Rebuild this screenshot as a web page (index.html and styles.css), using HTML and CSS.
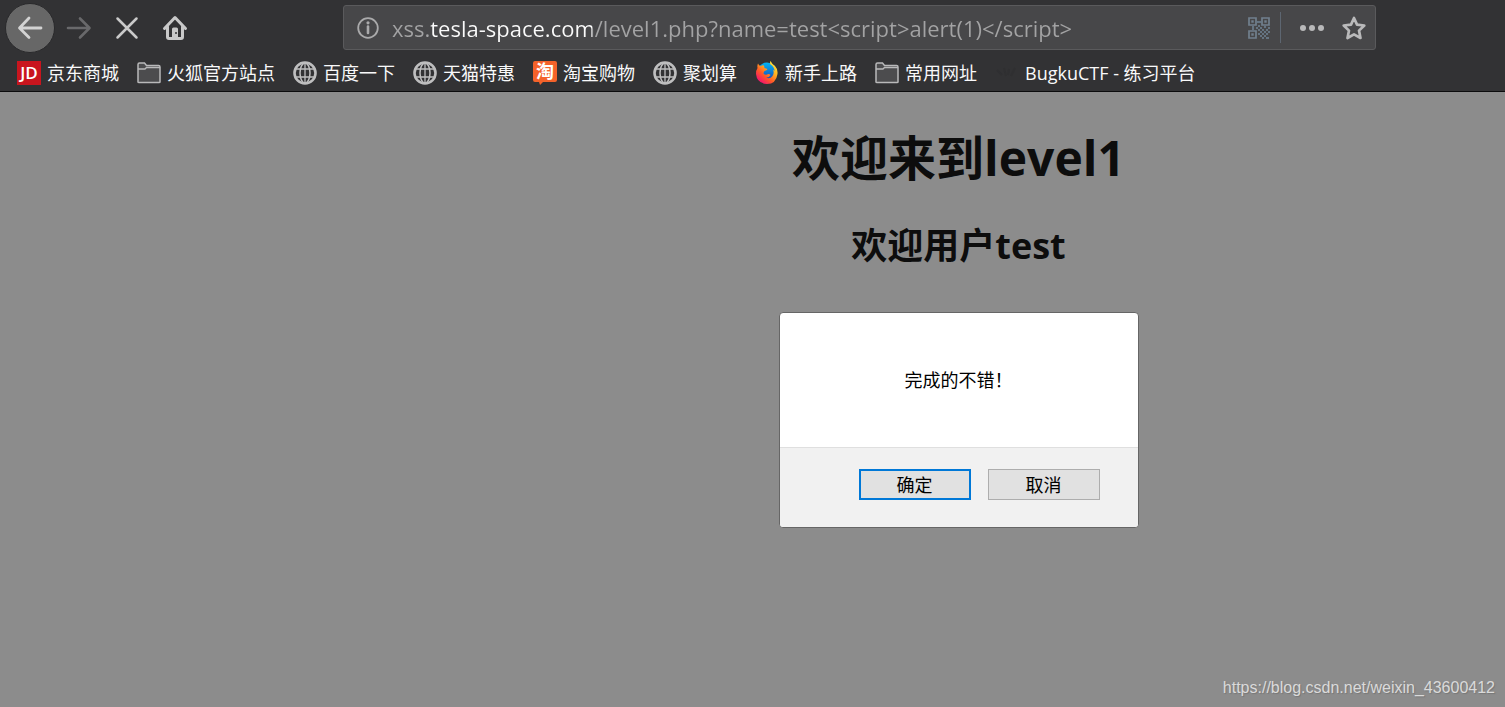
FILE: index.html
```
<!DOCTYPE html>
<html lang="zh-CN">
<head>
    <meta charset="UTF-8">
    <meta name="viewport" content="width=device-width, initial-scale=1.0">
    <title>欢迎来到level1</title>
    <link rel="stylesheet" href="styles.css">
</head>
<body>
    <!-- shared shapes -->
    <svg class="sprite" aria-hidden="true">
        <symbol id="folder" viewBox="0 0 24 24">
            <path d="M1 21V3.500Q1 2 2.500 2H7.500L9.500 4.500H21.500Q23 4.500 23 6V21Q23 21.500 22 21.500H2Q1 21.500 1 21Z" fill="#4c4c4e" stroke="#b9b9ba" stroke-width="1.500"/>
            <path d="M1 8H8L9.500 6.500H23" fill="none" stroke="#b9b9ba" stroke-width="1.300"/>
        </symbol>
        <symbol id="globe" viewBox="0 0 24 24">
            <g fill="none" stroke="#bebebf">
                <circle cx="12" cy="12" r="10.500" stroke-width="2.600"/>
                <ellipse cx="12" cy="12" rx="5" ry="10" stroke-width="1.500"/>
                <path d="M12 2V22M2 8H22M2 16H22" stroke-width="1.300"/>
            </g>
        </symbol>
        <symbol id="finder" viewBox="0 0 9 9">
            <path d="M1 1H8V8H1Z" fill="none" stroke="#71808e" stroke-width="1.700"/>
            <path d="M3.300 3.300H5.700V5.700H3.300Z" fill="#71808e"/>
        </symbol>
    </svg>

    <header class="browser">
        <div class="nav-bar">
            <button class="nav-btn back" type="button" aria-label="后退">
                <svg width="26" height="26" viewBox="0 0 26 26"><path d="M24 13H3M12 3L2.500 13L12 22.500" fill="none" stroke="#d3d3d3" stroke-width="2.800" stroke-linecap="round" stroke-linejoin="round"/></svg>
            </button>
            <button class="nav-btn" type="button" aria-label="前进">
                <svg width="26" height="26" viewBox="0 0 26 26"><path d="M2 13H23M14 3.500L23.500 13L14 22.500" fill="none" stroke="#69696b" stroke-width="2.600" stroke-linecap="round" stroke-linejoin="round"/></svg>
            </button>
            <button class="nav-btn" type="button" aria-label="停止">
                <svg width="26" height="26" viewBox="0 0 26 26"><path d="M3.500 3.500L22.500 22.500M22.500 3.500L3.500 22.500" fill="none" stroke="#cacaca" stroke-width="2.500" stroke-linecap="round"/></svg>
            </button>
            <button class="nav-btn" type="button" aria-label="主页">
                <svg width="26" height="26" viewBox="0 0 26 26">
                    <path d="M2.500 13.500L13 2.500L23.500 13.500M5.500 11.500V22Q5.500 23.500 7 23.500H19Q20.500 23.500 20.500 22V11.500" fill="none" stroke="#c9c9c9" stroke-width="3" stroke-linecap="round" stroke-linejoin="round"/>
                    <path d="M10 24V14Q10 12.500 11.500 12.500H14.500Q16 12.500 16 14V24Z" fill="#c9c9c9"/>
                    <circle cx="14" cy="18" r="1" fill="#333335"/>
                </svg>
            </button>
            <div class="url-bar">
                <button class="url-btn" type="button" aria-label="网站信息">
                    <svg width="22" height="22" viewBox="0 0 22 22"><circle cx="11" cy="11" r="9.800" fill="none" stroke="#aaaaab" stroke-width="1.800"/><path d="M11 9.500V16" stroke="#aaaaab" stroke-width="2.600" stroke-linecap="round"/><circle cx="11" cy="5.800" r="1.600" fill="#aaaaab"/></svg>
                </button>
                <input class="url" type="text" aria-label="地址" spellcheck="false" value="xss.tesla-space.com/level1.php?name=test&lt;script&gt;alert(1)&lt;/script&gt;">
                <button class="url-btn" type="button" aria-label="二维码">
                    <svg width="22" height="22" viewBox="0 0 22 22">
                        <use href="#finder" width="9" height="9"/>
                        <use href="#finder" x="13" width="9" height="9"/>
                        <use href="#finder" y="13" width="9" height="9"/>
                        <path d="M9 4h4v2h-4zM4 9h2v4h-2zM10 8h2v2h-2zM16 9h2v2h-2zM8 10h2v2h-2zM12 10h2v2h-2zM10 12h2v2h-2zM14 12h2v2h-2zM18 12h2v2h-2zM12 14h2v2h-2zM16 14h2v2h-2zM20 14h2v2h-2zM10 16h2v2h-2zM14 16h2v2h-2zM18 16h2v2h-2zM12 18h2v2h-2zM16 18h2v2h-2zM14 20h2v2h-2zM18 20h3v2h-3zM20 10h2v2h-2z" fill="#657482"/>
                    </svg>
                </button>
                <span class="divider"></span>
                <button class="url-btn more" type="button" aria-label="页面操作">
                    <svg width="24" height="24" viewBox="0 0 24 24" fill="#b9b9ba"><circle cx="3" cy="12" r="3"/><circle cx="12" cy="12" r="3"/><circle cx="21" cy="12" r="3"/></svg>
                </button>
                <button class="url-btn" type="button" aria-label="收藏">
                    <svg width="24" height="24" viewBox="0 0 24 24"><path d="M12 2L15 8.600L22.300 9.500L17 14.600L18.500 22L12 18.400L5.500 22L7 14.600L1.700 9.500L9 8.600Z" fill="none" stroke="#b9b9ba" stroke-width="2.700" stroke-linejoin="round"/></svg>
                </button>
            </div>
        </div>

        <nav class="bookmarks">
            <a href="#">
                <svg width="24" height="24" viewBox="0 0 24 24"><rect width="24" height="24" fill="#c9151e"/><text class="logo-jd" x="12" y="18" text-anchor="middle">JD</text></svg>
                京东商城
            </a>
            <a href="#"><svg width="24" height="24"><use href="#folder"/></svg>火狐官方站点</a>
            <a href="#"><svg width="24" height="24"><use href="#globe"/></svg>百度一下</a>
            <a href="#"><svg width="24" height="24"><use href="#globe"/></svg>天猫特惠</a>
            <a href="#">
                <svg width="24" height="24" viewBox="0 0 24 24"><path d="M2 0H22Q24 0 24 2V19Q24 21 22 21H10L7 24L6 21H2Q0 21 0 19V2Q0 0 2 0Z" fill="#f4622a"/><text class="logo-tao" x="12" y="17" text-anchor="middle">淘</text></svg>
                淘宝购物
            </a>
            <a href="#"><svg width="24" height="24"><use href="#globe"/></svg>聚划算</a>
            <a href="#">
                <svg width="24" height="24" viewBox="0 0 24 24">
                    <defs>
                        <linearGradient id="fox" x1="0.9" y1="0" x2="0.2" y2="0.9">
                            <stop offset="0" stop-color="#fff04a"/>
                            <stop offset="0.4" stop-color="#ffb01f"/>
                            <stop offset="0.7" stop-color="#ff5a26"/>
                            <stop offset="1" stop-color="#f5156c"/>
                        </linearGradient>
                        <linearGradient id="sky" x1="0.5" y1="0" x2="0.5" y2="1">
                            <stop offset="0" stop-color="#00b4f5"/>
                            <stop offset="1" stop-color="#1b3fae"/>
                        </linearGradient>
                    </defs>
                    <circle cx="12" cy="11" r="9.500" fill="url(#sky)"/>
                    <path d="M3 2.500Q4 4.500 5.500 5Q7.500 4 9 4.500L9.500 7L12.500 8Q12 9.500 9.500 10Q8.500 11 8.500 12.500Q10 14.500 12 13.500Q14 12.500 15.500 14Q14 17 11 16.500Q15 18.500 17.500 15Q19.500 12 18 8.500L19.500 10Q19.500 6 15.500 3.500Q14.500 1.500 15.500 0Q17 3 20 5Q23 8 22.500 13Q21 23 12 23Q2 22.500 1 13Q1 9 2.500 7Q2 4.500 3 2.500Z" fill="url(#fox)"/>
                </svg>
                新手上路
            </a>
            <a href="#"><svg width="24" height="24"><use href="#folder"/></svg>常用网址</a>
            <a href="#">
                <svg width="24" height="24" viewBox="0 0 24 24"><path d="M2 9L7 14M9 7L11 15M14 8L13 14M20 7L16 15" stroke="#2f2f31" stroke-width="2"/></svg>
                BugkuCTF - 练习平台
            </a>
        </nav>
    </header>

    <main class="page">
        <h1>欢迎来到level1</h1>
        <h2>欢迎用户test</h2>

        <div class="prompt" role="alertdialog" aria-labelledby="message">
            <p class="message" id="message">完成的不错！</p>
            <div class="actions">
                <button class="btn primary" type="button">确定</button>
                <button class="btn" type="button">取消</button>
            </div>
        </div>

        <div class="watermark">https://blog.csdn.net/weixin_43600412</div>
    </main>
</body>
</html>
```

FILE: styles.css
```
* {
    box-sizing: border-box;
}

body {
    margin: 0;
    min-height: 100vh;
    display: flex;
    flex-direction: column;
    background-color: #8c8c8c;
    font-family: "Open Sans", "Noto Sans CJK SC", sans-serif;
}

button {
    padding: 0;
    border: none;
    background: none;
    cursor: pointer;
}

svg {
    display: block;
    flex: none;
    overflow: visible;
}

.sprite {
    position: absolute;
    width: 0;
    height: 0;
}

/* browser toolbar */
.browser {
    background-color: #323234;
    border-bottom: 1px solid #0c0c0d;
}

.nav-bar {
    display: flex;
    align-items: center;
    height: 55px;
    padding: 0 129px 0 5px;
}

.nav-btn {
    display: flex;
    align-items: center;
    justify-content: center;
    width: 48px;
    height: 48px;
}

.back {
    width: 50px;
    height: 50px;
    border-radius: 50%;
    border: 1px solid #29292b;
    background-color: #676767;
}

.url-bar {
    flex: 1;
    display: flex;
    align-items: center;
    height: 45px;
    margin-left: 144px;
    padding: 0 9px 0 13px;
    border: 1px solid #5a5a5c;
    border-radius: 3px;
    background-color: #474749;
}

.url {
    flex: 1;
    min-width: 0;
    height: 40px;
    margin-left: 13px;
    padding: 0;
    border: none;
    outline: none;
    font-family: "Open Sans", sans-serif;
    font-size: 22px;
    color: #a3a3a4;
    /* the host name is brighter than the rest of the address */
    background: linear-gradient(to right, #a3a3a4 38px, #fbfbfb 38px, #fbfbfb 200px, #a3a3a4 200px);
    -webkit-background-clip: text;
    background-clip: text;
    -webkit-text-fill-color: transparent;
}

.divider {
    width: 1px;
    height: 31px;
    margin: 0 19px 0 10px;
    background-color: #5d6671;
}

.more {
    margin-right: 18px;
}

.bookmarks {
    display: flex;
    align-items: center;
    gap: 18px;
    height: 36px;
    padding-left: 17px;
}

.bookmarks a {
    display: flex;
    align-items: center;
    gap: 6px;
    color: #f9f9fa;
    font-size: 18px;
    line-height: 24px;
    white-space: nowrap;
    text-decoration: none;
}

.logo-jd {
    font: 600 17px "Open Sans", sans-serif;
    fill: #fff;
}

.logo-tao {
    font: bold 18px "Noto Sans CJK SC", sans-serif;
    fill: #fff;
}

/* page */
.page {
    position: relative;
    flex: 1;
    display: flex;
    flex-direction: column;
    align-items: center;
    padding: 34px 0 0 412px;
    color: #0d0d0d;
}

h1,
h2 {
    margin: 0;
}

h1 {
    font-size: 48px;
    line-height: 64px;
}

h2 {
    margin-top: 32px;
    font-size: 36px;
    line-height: 48px;
}

.prompt {
    width: 360px;
    margin-top: 42px;
    border: 1px solid #666;
    border-radius: 4px;
    overflow: hidden;
    background-color: #fff;
    color: #000;
}

.message {
    margin: 0;
    padding: 55px 0 55px 125px;
    font-size: 18px;
    line-height: 24px;
}

.actions {
    display: flex;
    justify-content: flex-end;
    gap: 17px;
    padding: 21px 38px 27px 0;
    border-top: 1px solid #dfdfdf;
    background-color: #f1f1f1;
}

.btn {
    width: 112px;
    height: 31px;
    padding-bottom: 2px;
    border: 1px solid #adadad;
    background-color: #e1e1e1;
    font-family: "Noto Sans CJK SC", sans-serif;
    font-size: 18px;
    line-height: 24px;
}

.primary {
    border: 2px solid #0078d7;
}

.watermark {
    position: absolute;
    right: 10px;
    bottom: 10px;
    font-family: "Liberation Sans", Arial, sans-serif;
    font-size: 16px;
    line-height: 18px;
    color: #dadada;
    text-shadow: 1px 1px 1px #777;
}
```
